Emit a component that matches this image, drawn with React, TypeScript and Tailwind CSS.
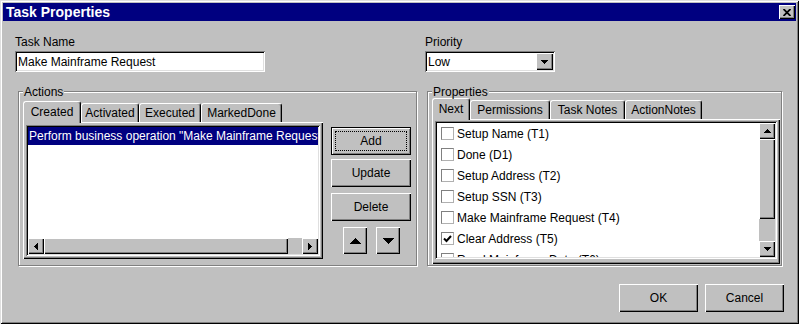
import React from "react";

const raised =
  "shadow-[inset_1px_1px_0_#fff,inset_-1px_-1px_0_#000,inset_-2px_-2px_0_#808080]";
const sunken =
  "shadow-[inset_1px_1px_0_#808080,inset_-1px_-1px_0_#fff,inset_2px_2px_0_#000,inset_-2px_-2px_0_#dfdfdf]";
const panel =
  "shadow-[inset_1px_1px_0_#fff,inset_-1px_-1px_0_#000,inset_-2px_-2px_0_#808080]";

function Tri({ dir, w, h }: { dir: "up" | "down" | "left" | "right"; w: number; h: number }) {
  const pts =
    dir === "up"
      ? `0,${h} ${w},${h} ${w / 2},0`
      : dir === "down"
      ? `0,0 ${w},0 ${w / 2},${h}`
      : dir === "left"
      ? `${w},0 ${w},${h} 0,${h / 2}`
      : `0,0 0,${h} ${w},${h / 2}`;
  return (
    <svg width={w} height={h} viewBox={`0 0 ${w} ${h}`} shapeRendering="crispEdges">
      <polygon points={pts} fill="#000" />
    </svg>
  );
}

function Tab({ label, active, className }: { label: string; active?: boolean; className: string }) {
  if (active) {
    return (
      <div
        className={`relative z-10 -mb-px h-[22px] bg-[#c0c0c0] border-t border-l border-r border-white border-r-black rounded-t-[3px] shadow-[inset_-1px_0_0_#808080] pt-[3px] text-center whitespace-nowrap ${className}`}
      >
        {label}
      </div>
    );
  }
  return (
    <div
      className={`h-[19px] border-t border-l border-r border-white border-r-black rounded-t-[3px] shadow-[inset_-1px_0_0_#808080] pt-[2px] text-center whitespace-nowrap ${className}`}
    >
      {label}
    </div>
  );
}

function GroupBox({ label, className, children }: { label: string; className: string; children: React.ReactNode }) {
  return (
    <div
      className={`relative border border-[#808080] shadow-[inset_1px_1px_0_#fff,1px_1px_0_#fff] ${className}`}
    >
      <span className="absolute z-20 left-[4px] -top-[7px] px-[1px] h-[13px] leading-[14px] bg-[#c0c0c0]">
        {label}
      </span>
      {children}
    </div>
  );
}

const nextItems: [string, boolean][] = [
  ["Setup Name (T1)", false],
  ["Done (D1)", false],
  ["Setup Address (T2)", false],
  ["Setup SSN (T3)", false],
  ["Make Mainframe Request (T4)", false],
  ["Clear Address (T5)", true],
  ["Read Mainframe Data (T6)", false],
];

export default function App() {
  return (
    <div
      className={`font-['Liberation_Sans',Arial,sans-serif] text-[12px] leading-[14px] text-black w-[799px] h-[324px] overflow-hidden bg-[#c0c0c0] p-[3px] shadow-[inset_1px_1px_0_#dfdfdf,inset_-1px_-1px_0_#000,inset_2px_2px_0_#fff,inset_-2px_-2px_0_#808080]`}
    >
      {/* title bar */}
      <div className="h-[18px] bg-[#000080] flex items-center justify-between pl-[3px] pr-[1px]">
        <span className="text-white font-bold text-[14px] leading-[18px]">Task Properties</span>
        <div className={`w-[16px] h-[14px] bg-[#c0c0c0] flex items-center justify-center ${raised}`}>
          <svg width="8" height="7" viewBox="0 0 8 7">
            <path d="M0.5 0 L7.5 7 M7.5 0 L0.5 7" stroke="#000" strokeWidth="1.8" />
          </svg>
        </div>
      </div>

      <div className="px-[12px] pt-[14px]">
        {/* name + priority */}
        <div className="flex">
          <div className="w-[410px]">
            <div className="h-[14px]">Task Name</div>
            <div className={`mt-[2px] h-[21px] w-[250px] bg-white flex items-center pl-[3px] ${sunken}`}>
              Make Mainframe Request
            </div>
          </div>
          <div>
            <div className="h-[14px]">Priority</div>
            <div
              className={`mt-[2px] h-[21px] w-[130px] bg-white flex items-center justify-between pl-[3px] pr-[2px] ${sunken}`}
            >
              <span>Low</span>
              <div className={`w-[17px] h-[17px] bg-[#c0c0c0] flex items-center justify-center ${raised}`}>
                <Tri dir="down" w={7} h={4} />
              </div>
            </div>
          </div>
        </div>

        {/* groups */}
        <div className="flex mt-[19px] ml-[3px]">
          <GroupBox label="Actions" className="w-[399px] h-[175px] pl-[4px] pt-[9px]">
            <div className="flex">
              <div className="w-[300px]">
                <div className="flex items-end h-[21px]">
                  <Tab active label="Created" className="w-[58px]" />
                  <Tab label="Activated" className="w-[58px]" />
                  <Tab label="Executed" className="w-[62px]" />
                  <Tab label="MarkedDone" className="w-[81px]" />
                </div>
                <div className={`h-[137px] p-[3px] ${panel}`}>
                  <div className={`h-[131px] bg-white p-[2px] flex flex-col ${sunken}`}>
                    <div className="flex-1 overflow-hidden">
                      <div className="h-[18px] leading-[18px] bg-[#000080] text-white pl-[1px] whitespace-nowrap">
                        Perform business operation "Make Mainframe Request"
                      </div>
                    </div>
                    <div className="h-[16px] flex bg-[#c0c0c0]">
                      <div className={`w-[16px] h-[16px] flex items-center justify-center ${raised}`}>
                        <Tri dir="left" w={4} h={7} />
                      </div>
                      <div className={`w-[244px] h-[16px] ${raised}`} />
                      <div className="flex-1" />
                      <div className={`w-[16px] h-[16px] flex items-center justify-center ${raised}`}>
                        <Tri dir="right" w={4} h={7} />
                      </div>
                    </div>
                  </div>
                </div>
              </div>

              <div className="ml-[8px] pt-[26px] w-[80px] flex flex-col">
                <div
                  className="h-[28px] border border-black shadow-[inset_1px_1px_0_#fff,inset_-1px_-1px_0_#808080] outline outline-1 outline-dotted outline-black outline-offset-[-5px] flex items-center justify-center"
                >
                  Add
                </div>
                <div className={`mt-[4px] h-[28px] flex items-center justify-center ${raised}`}>Update</div>
                <div className={`mt-[6px] h-[28px] flex items-center justify-center ${raised}`}>Delete</div>
                <div className="mt-[6px] flex pl-[12px] gap-[9px]">
                  <div className={`w-[24px] h-[27px] flex items-center justify-center ${raised}`}>
                    <Tri dir="up" w={11} h={6} />
                  </div>
                  <div className={`w-[24px] h-[27px] flex items-center justify-center ${raised}`}>
                    <Tri dir="down" w={11} h={6} />
                  </div>
                </div>
              </div>
            </div>
          </GroupBox>

          <GroupBox label="Properties" className="ml-[10px] w-[355px] h-[175px] pl-[4px] pt-[6px]">
            <div className="w-[348px]">
              <div className="flex items-end h-[21px]">
                <Tab active label="Next" className="w-[38px]" />
                <Tab label="Permissions" className="w-[80px]" />
                <Tab label="Task Notes" className="w-[75px]" />
                <Tab label="ActionNotes" className="w-[77px]" />
              </div>
              <div className={`h-[145px] pt-[2px] pl-[3px] ${panel}`}>
                <div className={`w-[342px] h-[138px] bg-white p-[2px] flex ${sunken}`}>
                  <div className="flex-1 overflow-hidden">
                    {nextItems.map(([label, checked]) => (
                      <div key={label} className="h-[21px] flex items-center pl-[4px] gap-[3px] whitespace-nowrap">
                        <span className="w-[13px] h-[13px] shrink-0 bg-white border border-[#808080] border-r-[#b0b0b0] border-b-[#b0b0b0] flex items-center justify-center">
                          {checked && (
                            <svg width="9" height="8" viewBox="0 0 9 8">
                              <path d="M1 3.5 L3.5 6 L8 1" fill="none" stroke="#000" strokeWidth="2" />
                            </svg>
                          )}
                        </span>
                        <span>{label}</span>
                      </div>
                    ))}
                  </div>
                  <div className="w-[16px] flex flex-col bg-[#c0c0c0]">
                    <div className={`h-[16px] flex items-center justify-center ${raised}`}>
                      <Tri dir="up" w={7} h={4} />
                    </div>
                    <div className={`h-[80px] ${raised}`} />
                    <div className="flex-1" />
                    <div className={`h-[16px] flex items-center justify-center ${raised}`}>
                      <Tri dir="down" w={7} h={4} />
                    </div>
                  </div>
                </div>
              </div>
            </div>
          </GroupBox>
        </div>

        {/* dialog buttons */}
        <div className="flex justify-end gap-[7px] mt-[18px]">
          <div className={`w-[79px] h-[28px] flex items-center justify-center ${raised}`}>OK</div>
          <div className={`w-[79px] h-[28px] flex items-center justify-center ${raised}`}>Cancel</div>
        </div>
      </div>
    </div>
  );
}
